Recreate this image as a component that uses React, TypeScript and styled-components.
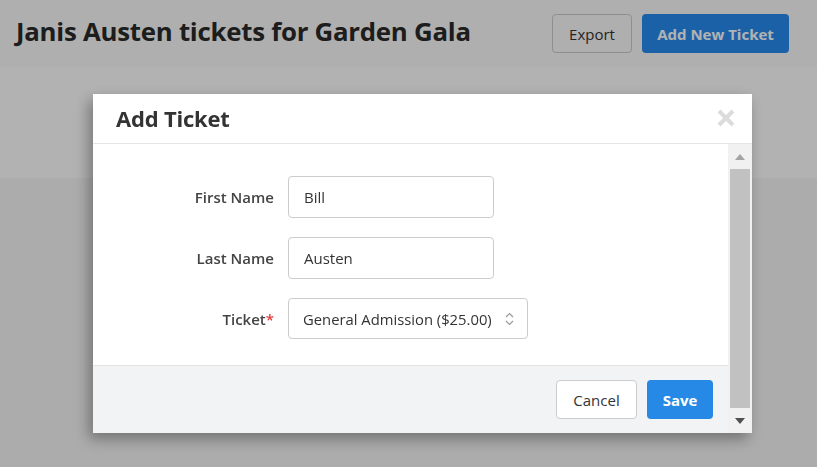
import React from 'react'
import styled, { createGlobalStyle } from 'styled-components'

const GlobalStyle = createGlobalStyle`
  html, body {
    margin: 0;
    padding: 0;
    font-family: "Open Sans", "Noto Sans", sans-serif;
    overflow: hidden;
  }
  * { box-sizing: border-box; }
`

const Page = styled.div`
  height: 100vh;
  background: #f7f7f7;
`

const TopBar = styled.header`
  height: 67px;
  background: #fbfbfb;
  display: flex;
  justify-content: space-between;
  align-items: center;
  padding: 0 28px 0 16px;
`

const PageTitle = styled.h1`
  margin: 0 0 6px;
  font-size: 25.8px;
  font-weight: 700;
  color: #2a2a2a;
  letter-spacing: -0.25px;
`

const Actions = styled.div`
  display: flex;
  gap: 10px;
`

const Button = styled.button<{ $primary?: boolean; $width: number; $bg?: string }>`
  width: ${p => p.$width}px;
  height: 39px;
  border-radius: 4px;
  font-family: inherit;
  font-size: 15px;
  font-weight: ${p => (p.$primary ? 700 : 500)};
  border: 1px solid ${p => (p.$primary ? 'transparent' : '#ccc')};
  background: ${p => p.$bg ?? (p.$primary ? '#288cf0' : '#fbfbfb')};
  color: ${p => (p.$primary ? '#fff' : '#333')};
  padding: 0;
`

const Band = styled.div`
  height: 111px;
  background: #fff;
`

const Backdrop = styled.div`
  position: fixed;
  inset: 0;
  background: rgba(0, 0, 0, 0.3);
  display: flex;
  align-items: flex-start;
  padding: 94px 0 0 93px;
`

const Modal = styled.div`
  width: 659px;
  background: #fff;
  box-shadow: -4px 6px 14px rgba(0, 0, 0, 0.35);
`

const ModalHeader = styled.div`
  height: 50px;
  display: flex;
  justify-content: space-between;
  align-items: center;
  padding: 0 17px 1px 23px;
  border-bottom: 1px solid #e5e5e5;
`

const ModalTitle = styled.h2`
  margin: 0;
  font-size: 22px;
  font-weight: 700;
  color: #333;
  letter-spacing: -0.2px;
`

const Close = styled.button`
  border: 0;
  background: none;
  padding: 0;
  width: 18px;
  height: 18px;
  display: flex;
`

const ScrollArea = styled.div`
  display: flex;
  height: 289px;
`

const Content = styled.div`
  flex: 1;
  display: flex;
  flex-direction: column;
`

const Body = styled.div`
  height: 221px;
  padding-top: 32px;
`

const Form = styled.div`
  display: grid;
  grid-template-columns: 181px auto;
  column-gap: 14px;
  row-gap: 19px;
  align-items: center;
`

const Label = styled.label`
  text-align: right;
  font-size: 15px;
  font-weight: 600;
  color: #444;
`

const Required = styled.span`
  color: #e23b3b;
`

const Input = styled.input<{ $width: number }>`
  width: ${p => p.$width}px;
  height: 42px;
  border: 1px solid #ccc;
  border-radius: 4px;
  padding: 0 15px;
  font-family: inherit;
  font-size: 15px;
  color: #333;
  outline: none;
`

const SelectBox = styled.div`
  width: 240px;
  height: 41px;
  border: 1px solid #ccc;
  border-radius: 4px;
  padding: 0 13px 0 14px;
  display: flex;
  align-items: center;
  justify-content: space-between;
  font-size: 14.8px;
  color: #333;
`

const Footer = styled.div`
  height: 68px;
  background: #f1f3f5;
  border-top: 1px solid #e3e3e3;
  display: flex;
  justify-content: flex-end;
  align-items: center;
  gap: 10px;
  padding-right: 15px;
`

const Scrollbar = styled.div`
  width: 24px;
  background: #f1f1f1;
  display: flex;
  flex-direction: column;
`

const ScrollButton = styled.div`
  height: 25px;
  display: flex;
  align-items: center;
  justify-content: center;
`

const Thumb = styled.div`
  flex: 1;
  margin: 0 2px;
  background: #c1c1c1;
`

const Arrow = ({ up, color }: { up?: boolean; color: string }) => (
  <svg width="10" height="6" viewBox="0 0 10 6">
    <polygon points={up ? '0,6 10,6 5,0' : '0,0 10,0 5,6'} fill={color} />
  </svg>
)

export default function App() {
  return (
    <>
      <GlobalStyle />
      <Page>
        <TopBar>
          <PageTitle>Janis Austen tickets for Garden Gala</PageTitle>
          <Actions>
            <Button $width={80}>Export</Button>
            <Button $primary $width={147}>Add New Ticket</Button>
          </Actions>
        </TopBar>
        <Band />
      </Page>
      <Backdrop>
        <Modal>
          <ModalHeader>
            <ModalTitle>Add Ticket</ModalTitle>
            <Close aria-label="Close">
              <svg width="18" height="18" viewBox="0 0 18 18">
                <path d="M2 2 L16 16 M16 2 L2 16" stroke="#dcdcdc" strokeWidth="4" />
              </svg>
            </Close>
          </ModalHeader>
          <ScrollArea>
            <Content>
              <Body>
                <Form>
                  <Label>First Name</Label>
                  <Input $width={206} defaultValue="Bill" />
                  <Label>Last Name</Label>
                  <Input $width={206} defaultValue="Austen" />
                  <Label>Ticket<Required>*</Required></Label>
                  <SelectBox>
                    <span>General Admission ($25.00)</span>
                    <svg width="9" height="14" viewBox="0 0 9 14">
                      <path d="M1 5 L4.5 1.5 L8 5 M1 9 L4.5 12.5 L8 9" stroke="#999" strokeWidth="1.2" fill="none" />
                    </svg>
                  </SelectBox>
                </Form>
              </Body>
              <Footer>
                <Button $width={81} $bg="#fff">Cancel</Button>
                <Button $primary $width={66} $bg="#2589e5">Save</Button>
              </Footer>
            </Content>
            <Scrollbar>
              <ScrollButton><Arrow up color="#a3a3a3" /></ScrollButton>
              <Thumb />
              <ScrollButton><Arrow color="#505050" /></ScrollButton>
            </Scrollbar>
          </ScrollArea>
        </Modal>
      </Backdrop>
    </>
  )
}
